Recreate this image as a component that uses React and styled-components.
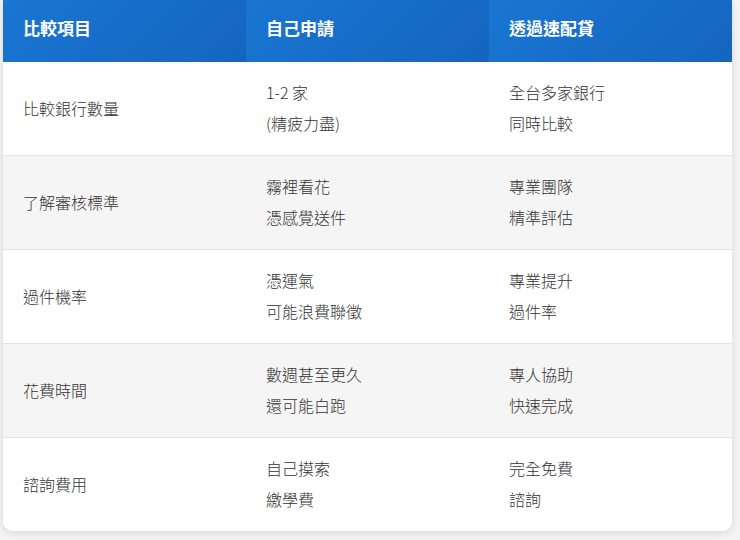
import React from "react";
import styled, { createGlobalStyle } from "styled-components";

const Global = createGlobalStyle`
  html, body { margin: 0; padding: 0; background: #f4f4f4; }
  body { font-family: "Noto Sans CJK TC", "Noto Sans", sans-serif; }
`;

const Page = styled.div`
  padding: 0 8px 11px 3px;
`;

const Card = styled.div`
  background: #fff;
  border-radius: 0 0 10px 10px;
  overflow: hidden;
  box-shadow: 0 2px 8px rgba(0, 0, 0, 0.12);
`;

const Table = styled.table`
  width: 100%;
  border-collapse: collapse;
  table-layout: fixed;
`;

const Th = styled.th`
  background: linear-gradient(135deg, #1976d2, #1565c0);
  color: #fff;
  text-align: left;
  font-size: 17px;
  font-weight: 700;
  padding: 0 20px 7px;
  height: 55px;
  line-height: 25px;
`;

const Tr = styled.tr`
  background: ${(p) => (p.$alt ? "#f5f5f5" : "#fff")};
  border-bottom: ${(p) => (p.$last ? "none" : "1px solid #e2e2e2")};
`;

const Td = styled.td`
  padding: 15px 20px 16px;
  font-size: 16px;
  font-weight: 300;
  line-height: 31px;
  color: #333;
  vertical-align: middle;
`;

const rows = [
  ["比較銀行數量", ["1-2 家", "(精疲力盡)"], ["全台多家銀行", "同時比較"]],
  ["了解審核標準", ["霧裡看花", "憑感覺送件"], ["專業團隊", "精準評估"]],
  ["過件機率", ["憑運氣", "可能浪費聯徵"], ["專業提升", "過件率"]],
  ["花費時間", ["數週甚至更久", "還可能白跑"], ["專人協助", "快速完成"]],
  ["諮詢費用", ["自己摸索", "繳學費"], ["完全免費", "諮詢"]],
];

const Lines = ({ lines }) =>
  lines.map((l, i) => (
    <React.Fragment key={i}>
      {i > 0 && <br />}
      {l}
    </React.Fragment>
  ));

export default function App() {
  return (
    <Page>
      <Global />
      <Card>
        <Table>
          <thead>
            <tr>
              <Th>比較項目</Th>
              <Th>自己申請</Th>
              <Th>透過速配貸</Th>
            </tr>
          </thead>
          <tbody>
            {rows.map((r, i) => (
              <Tr key={i} $alt={i % 2 === 1} $last={i === rows.length - 1}>
                <Td>{r[0]}</Td>
                <Td>
                  <Lines lines={r[1]} />
                </Td>
                <Td>
                  <Lines lines={r[2]} />
                </Td>
              </Tr>
            ))}
          </tbody>
        </Table>
      </Card>
    </Page>
  );
}
